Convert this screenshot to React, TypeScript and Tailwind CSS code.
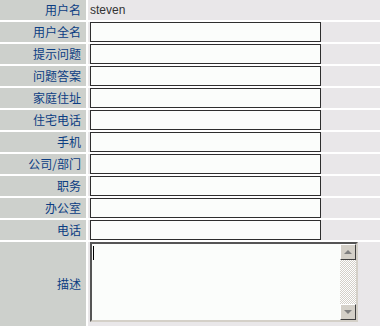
const rows = ["用户全名", "提示问题", "问题答案", "家庭住址", "住宅电话", "手机", "公司/部门", "职务", "办公室", "电话"];

const Label = ({ text, tall }: { text: string; tall?: boolean }) => (
  <div
    className={`flex items-center justify-end pr-[5px] bg-[#cdd0cc] text-[12px] text-[#0b3d82] ${tall ? "h-[84px]" : "h-[20px]"}`}
    style={{ fontFamily: '"Noto Sans CJK SC", sans-serif' }}
  >
    {text}
  </div>
);

const ScrollButton = ({ down }: { down?: boolean }) => (
  <div className="w-[16px] h-[16px] bg-[#d4d0c8] border border-t-[#fff] border-l-[#fff] border-r-[#404040] border-b-[#404040] flex items-center justify-center">
    <svg width="8" height="5" viewBox="0 0 8 5">
      {down ? <polygon points="0,0 8,0 4,4" fill="#808080" /> : <polygon points="0,4 8,4 4,0" fill="#808080" />}
    </svg>
  </div>
);

export default function App() {
  return (
    <div className="w-[380px] h-[326px] overflow-hidden bg-white">
      <div className="grid grid-cols-[86px_1fr] gap-[2px]">
        <Label text="用户名" />
        <div className="h-[20px] bg-[#e9e7e9] flex items-center pl-[2px]">
          <span className="text-[12px] text-[#333]" style={{ fontFamily: '"Liberation Sans", sans-serif' }}>
            steven
          </span>
        </div>
        {rows.map((r) => (
          <div key={r} className="contents">
            <Label text={r} />
            <div className="h-[20px] bg-[#e9e7e9] pl-[2px] flex items-center">
              <div className="w-[231px] h-[20px] border border-[#2e2e2e] bg-[#fbfdfb]" />
            </div>
          </div>
        ))}
        <Label text="描述" tall />
        <div className="h-[84px] bg-[#e9e7e9] pl-[2px] pt-0">
          <div className="w-[268px] h-[80px] flex bg-[#fbfdfb] border-2 border-t-[#555] border-l-[#555] border-r-[#d4d0c8] border-b-[#d4d0c8]">
            <div className="flex-1 pl-[1px] pt-[2px]">
              <div className="w-[1px] h-[14px] bg-black" />
            </div>
            <div className="w-[16px] flex flex-col">
              <ScrollButton />
              <div
                className="flex-1"
                style={{
                  backgroundImage: "repeating-conic-gradient(#d4d0c8 0% 25%, #ffffff 0% 50%)",
                  backgroundSize: "2px 2px",
                }}
              />
              <ScrollButton down />
            </div>
          </div>
        </div>
      </div>
    </div>
  );
}
